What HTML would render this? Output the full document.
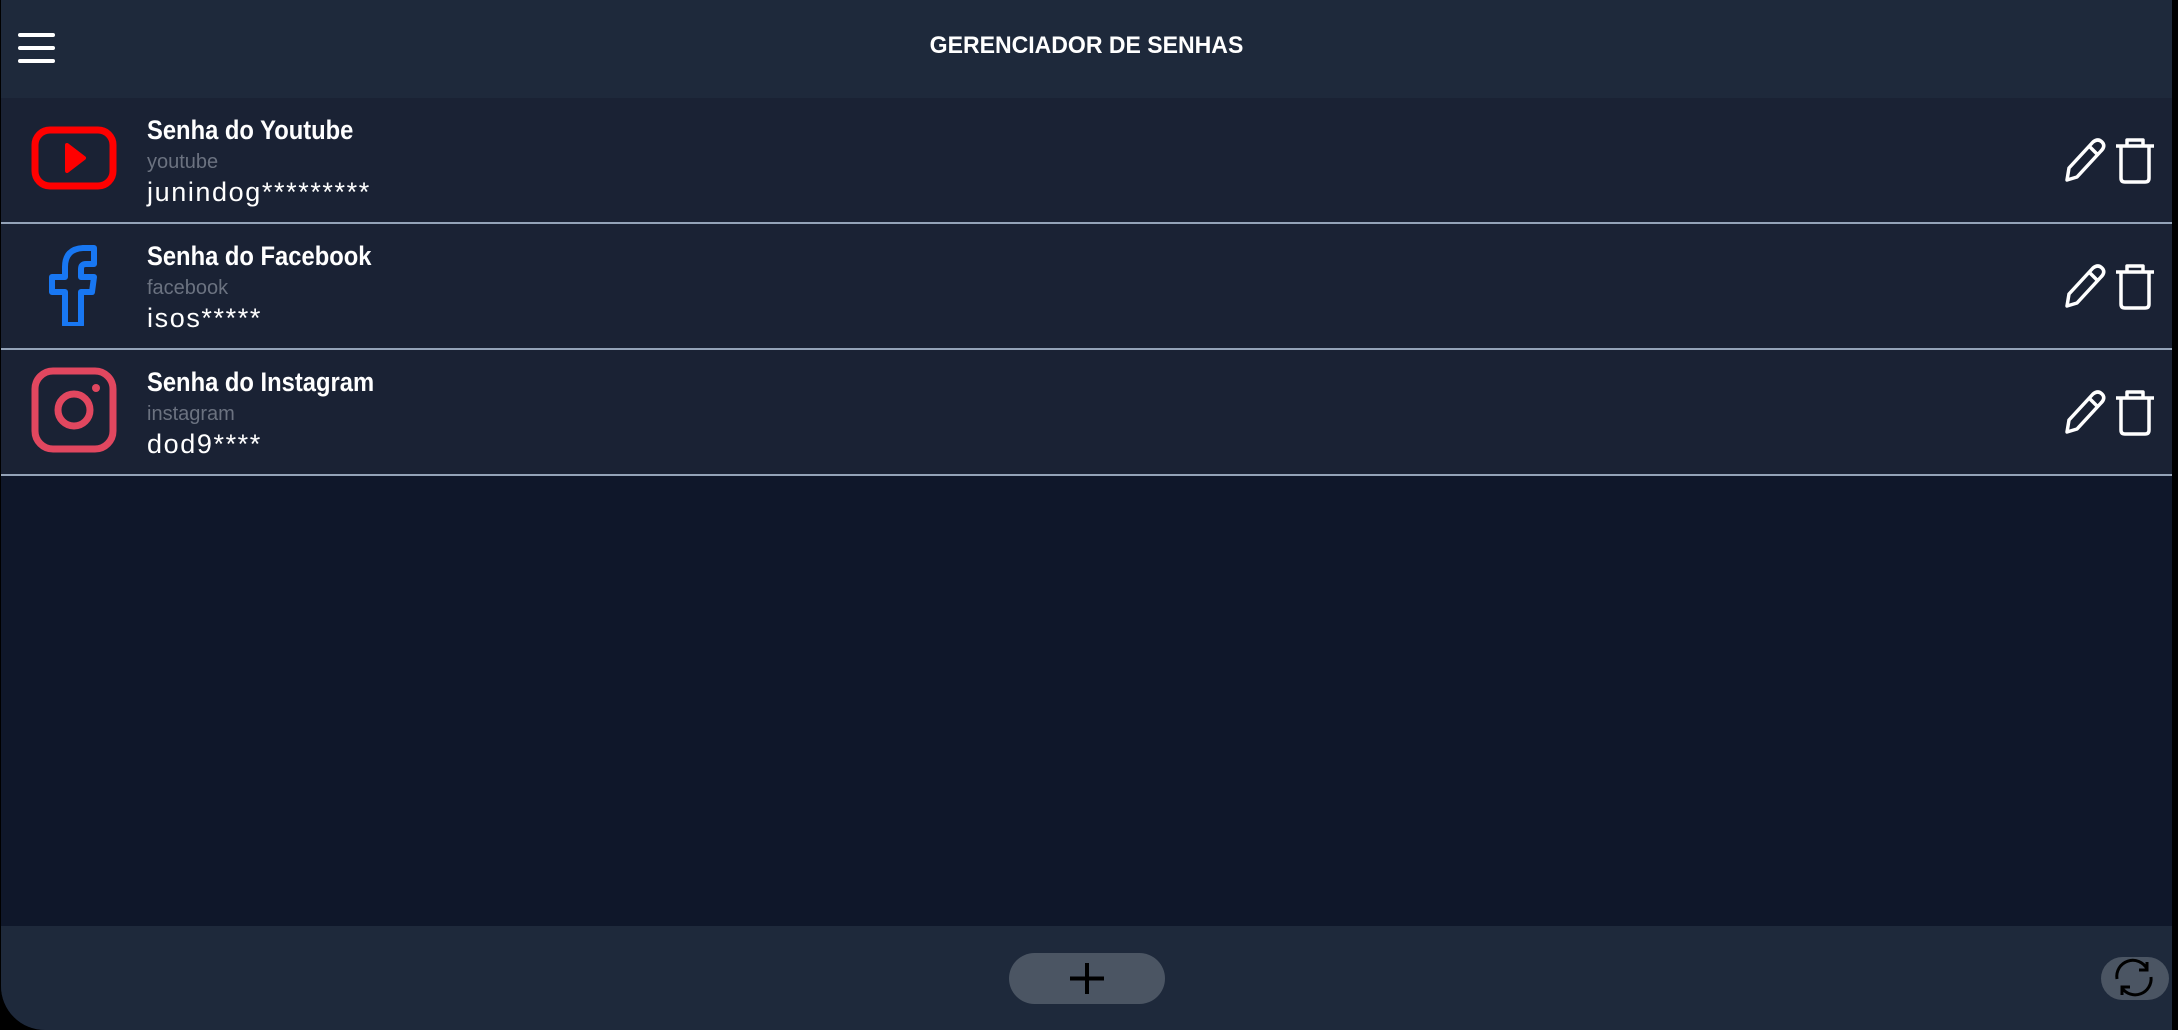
<!DOCTYPE html>
<html><head><meta charset="utf-8"><style>
*{margin:0;padding:0;box-sizing:border-box}
body{width:2178px;height:1030px;background:#000;overflow:hidden;font-family:"Liberation Sans",sans-serif}
.app{position:absolute;left:1px;top:0;width:2171px;height:1030px;background:#0f172a;border-bottom-left-radius:44px;overflow:hidden}
.hdr{position:absolute;left:0;top:0;width:100%;height:98px;background:#1e293b}
.hdr .t{position:absolute;left:0;right:0;top:32px;text-align:center;color:#fff;font-size:24px;font-weight:bold;transform:scaleX(0.96)}
.menu{position:absolute;left:17px;top:33px;width:37px}
.menu i{display:block;height:4px;background:#fff;border-radius:2px;margin-bottom:9px}
.row{position:absolute;left:0;width:100%;height:126px;background:#1a2234;border-bottom:2px solid #94a3b8}
.row .ic{position:absolute;left:30px;top:16px;width:86px;height:86px}
.row .a{position:absolute;left:146px;top:17px;color:#fff;font-size:27px;font-weight:bold;transform:scaleX(0.88);transform-origin:left}
.row .b{position:absolute;left:146px;top:53px;color:#6b7280;font-size:20px}
.row .c{position:absolute;left:146px;top:79px;color:#fff;font-size:27px;letter-spacing:1.6px}
.row .act{position:absolute;left:2058px;top:38px}
.ftr{position:absolute;left:0;top:926px;width:100%;height:104px;background:#1e293b}
.plus{position:absolute;left:1008px;top:27px;width:156px;height:51px;background:#4b5563;border-radius:26px}
.ref{position:absolute;left:2100px;top:31px;width:68px;height:43px;background:#4b5563;border-radius:22px}
</style></head><body><div class="app">
<div class="hdr"><div class="menu"><i></i><i></i><i></i></div><div class="t">GERENCIADOR DE SENHAS</div></div>

<div class="row" style="top:98px">
<svg class="ic" viewBox="0 0 86 86"><rect x="4" y="16" width="78" height="56" rx="15" fill="none" stroke="#f00" stroke-width="7"/><path d="M36 31 L53 44 L36 57Z" fill="#f00" stroke="#f00" stroke-width="4" stroke-linejoin="round"/></svg>
<div class="a">Senha do Youtube</div><div class="b">youtube</div><div class="c">junindog*********</div>
<svg class="act" width="100" height="50" viewBox="0 0 100 50"><path d="M8 44 L10 32 L34 6 Q39 2 43 6 Q47 10 42 15 L18 41 Z M30 10 L39 19" fill="none" stroke="#fff" stroke-width="3.5" stroke-linejoin="round"/><path d="M57 10 H95 M68 10 V4 H84 V10 M62 10 V42 Q62 46 66 46 H86 Q90 46 90 42 V10" fill="none" stroke="#fff" stroke-width="3.5" stroke-linejoin="round"/></svg>
</div>

<div class="row" style="top:224px">
<svg class="ic" viewBox="0 0 86 86" style="top:16px"><path d="M34 85 V52 H21 V37 H34 V27 Q34 9 52 8 H63 V24 H55 Q50 24 50 29 V37 H63 L61 52 H50 V85 Z" fill="none" stroke="#1877f2" stroke-width="6" stroke-linejoin="round"/></svg>
<div class="a">Senha do Facebook</div><div class="b">facebook</div><div class="c">isos*****</div>
<svg class="act" width="100" height="50" viewBox="0 0 100 50"><path d="M8 44 L10 32 L34 6 Q39 2 43 6 Q47 10 42 15 L18 41 Z M30 10 L39 19" fill="none" stroke="#fff" stroke-width="3.5" stroke-linejoin="round"/><path d="M57 10 H95 M68 10 V4 H84 V10 M62 10 V42 Q62 46 66 46 H86 Q90 46 90 42 V10" fill="none" stroke="#fff" stroke-width="3.5" stroke-linejoin="round"/></svg>
</div>

<div class="row" style="top:350px">
<svg class="ic" viewBox="0 0 86 86" style="top:17px"><rect x="4" y="4" width="78" height="78" rx="18" fill="none" stroke="#e1475f" stroke-width="7"/><circle cx="43" cy="43" r="16" fill="none" stroke="#e1475f" stroke-width="7"/><circle cx="65" cy="21" r="4" fill="#e1475f"/></svg>
<div class="a">Senha do Instagram</div><div class="b">instagram</div><div class="c">dod9****</div>
<svg class="act" width="100" height="50" viewBox="0 0 100 50"><path d="M8 44 L10 32 L34 6 Q39 2 43 6 Q47 10 42 15 L18 41 Z M30 10 L39 19" fill="none" stroke="#fff" stroke-width="3.5" stroke-linejoin="round"/><path d="M57 10 H95 M68 10 V4 H84 V10 M62 10 V42 Q62 46 66 46 H86 Q90 46 90 42 V10" fill="none" stroke="#fff" stroke-width="3.5" stroke-linejoin="round"/></svg>
</div>

<div class="ftr">
<div class="plus"><svg width="156" height="51" viewBox="0 0 156 51"><path d="M78 10 V41 M61 25.5 H95" stroke="#000" stroke-width="4"/></svg></div>
<div class="ref"><svg width="68" height="43" viewBox="0 0 68 43"><path d="M16 22 A16 16 0 0 1 46 12 M50 20 A16 16 0 0 1 21 31" fill="none" stroke="#000" stroke-width="3"/><path d="M46 5 V13 H38 M21 38 V30 H29" fill="none" stroke="#000" stroke-width="3"/></svg></div>
</div>
</div></body></html>
